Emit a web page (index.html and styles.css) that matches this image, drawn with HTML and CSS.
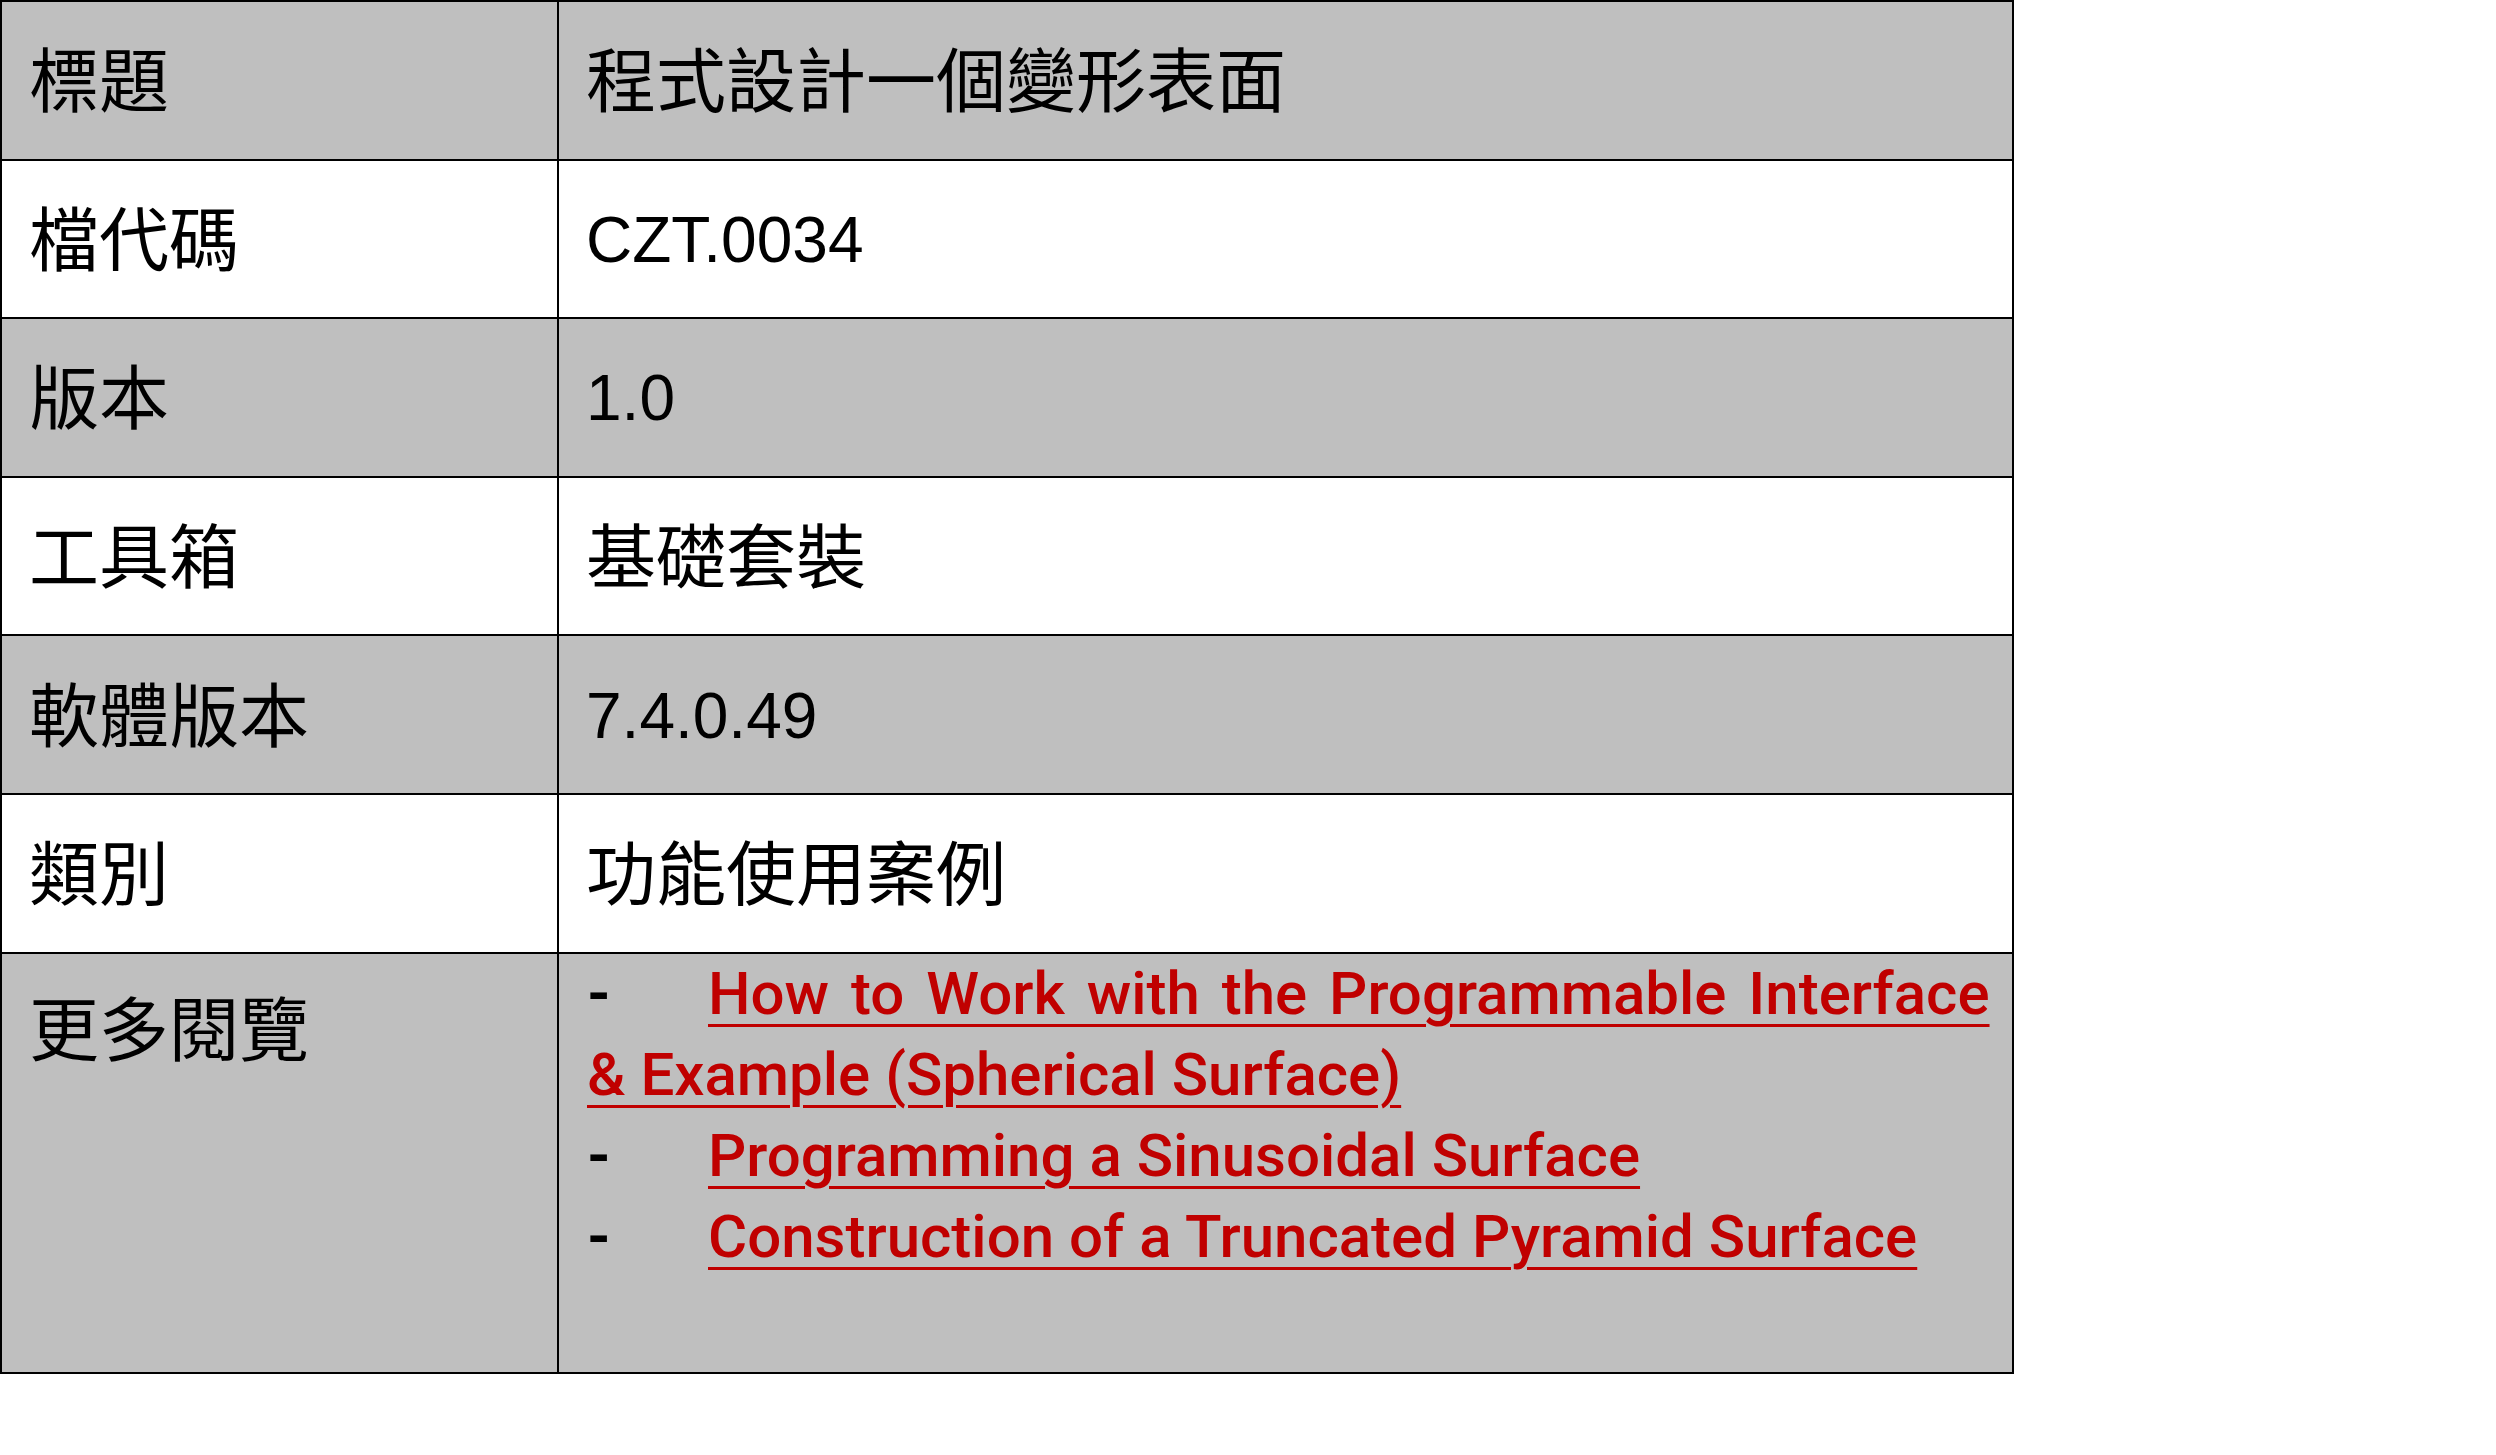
FILE: index.html
```html
<!DOCTYPE html>
<html lang="zh-Hant">
<head>
  <meta charset="UTF-8">
  <title>程式設計一個變形表面</title>
  <link rel="stylesheet" href="styles.css">
</head>
<body>
  <table class="info">
    <colgroup>
      <col class="col-key">
      <col class="col-val">
    </colgroup>
    <tr class="shade">
      <th>標題</th>
      <td>程式設計一個變形表面</td>
    </tr>
    <tr>
      <th>檔代碼</th>
      <td><span class="latin">CZT.0034</span></td>
    </tr>
    <tr class="shade">
      <th>版本</th>
      <td><span class="latin">1.0</span></td>
    </tr>
    <tr>
      <th>工具箱</th>
      <td>基礎套裝</td>
    </tr>
    <tr class="shade">
      <th>軟體版本</th>
      <td><span class="latin">7.4.0.49</span></td>
    </tr>
    <tr>
      <th>類別</th>
      <td>功能使用案例</td>
    </tr>
    <tr class="shade more">
      <th>更多閱覽</th>
      <td>
        <div class="links">
          <p class="link-item"><span class="dash">-</span><a href="#"><span class="spread">How to Work with the Programmable Interface</span><br>&amp; Example (Spherical Surface)</a></p>
          <p class="link-item"><span class="dash">-</span><a href="#">Programming a Sinusoidal Surface</a></p>
          <p class="link-item"><span class="dash">-</span><a href="#">Construction of a Truncated Pyramid Surface</a></p>
        </div>
      </td>
    </tr>
  </table>
</body>
</html>
```

FILE: styles.css
```css
body {
  margin: 0;
  background: #ffffff;
  font-family: "Noto Sans CJK TC", sans-serif;
  color: #000;
}

.info {
  border-collapse: collapse;
  table-layout: fixed;
  width: 2014px;
}

.col-key {
  width: 557px;
}

.info tr {
  height: 158.6px;
}

.info th,
.info td {
  border: 2px solid #000;
  padding: 0 27px 6px;
  font-size: 70px;
  font-weight: normal;
  line-height: 100px;
  text-align: left;
  vertical-align: middle;
}

.shade th,
.shade td {
  background-color: #bfbfbf;
}

.latin {
  font-family: "Liberation Sans", sans-serif;
  font-size: 64px;
}

.info tr.more {
  height: 420px;
}

.more th {
  vertical-align: top;
  padding-top: 22px;
}

.more td {
  vertical-align: top;
  padding-top: 0;
  padding-left: 28px;
}

.links {
  margin-top: -1px;
  font-family: Roboto, sans-serif;
  font-size: 60px;
  line-height: 81px;
}

.link-item {
  margin: 0;
  white-space: nowrap;
}

.dash {
  display: inline-block;
  width: 121px;
  font-weight: bold;
}

.link-item a {
  color: #c00000;
  font-weight: 500;
  text-decoration: underline;
  text-decoration-thickness: 3px;
  text-underline-offset: 10px;
}

.spread {
  word-spacing: 7px;
}
```
